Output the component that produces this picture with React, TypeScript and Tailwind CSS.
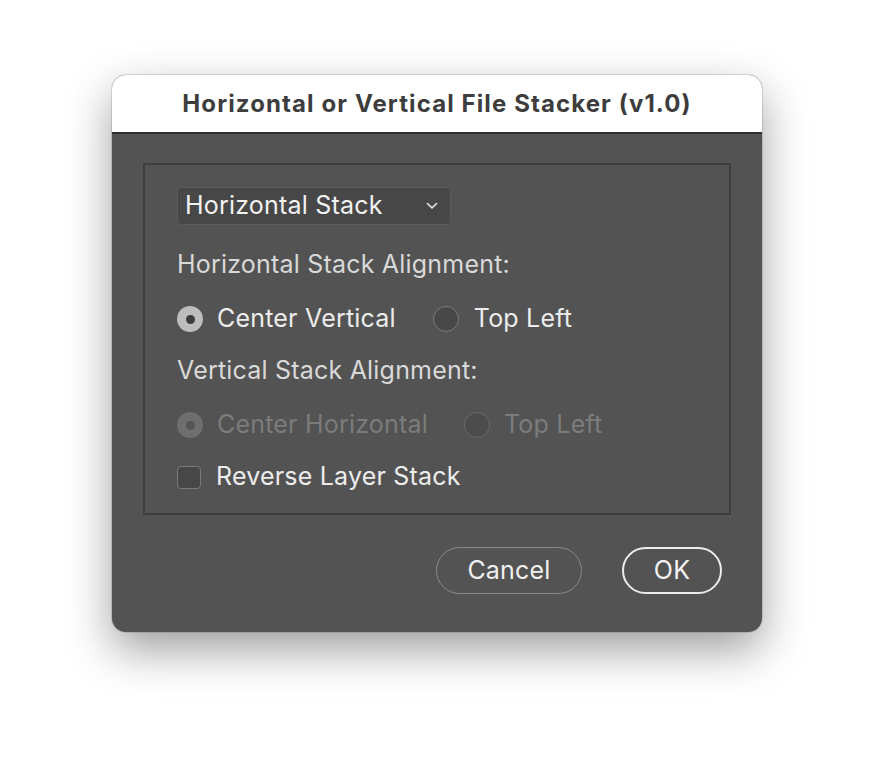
import { useState } from "react";

const Radio = ({ checked, disabled }: { checked: boolean; disabled?: boolean }) => (
  <span
    className={
      "flex h-[26px] w-[26px] shrink-0 items-center justify-center rounded-full " +
      (checked
        ? disabled
          ? "bg-[#6e6e6e]"
          : "bg-[#bdbdbd]"
        : disabled
          ? "border-[1.5px] border-[#6a6a6a] bg-[#4c4c4c]"
          : "border-[1.5px] border-[#7c7c7c] bg-[#484848]")
    }
  >
    {checked && (
      <span className={"h-[9px] w-[9px] rounded-full " + (disabled ? "bg-[#555]" : "bg-[#3c3c3c]")} />
    )}
  </span>
);

export default function App() {
  const [hAlign, setHAlign] = useState("center");
  const [reverse, setReverse] = useState(false);

  return (
    <div
      className="flex min-h-[780px] justify-center bg-white pt-[75px]"
      style={{ fontFamily: "Inter, 'Noto Sans', sans-serif" }}
    >
      <div className="flex h-[557px] w-[650px] flex-col overflow-hidden rounded-[14px] bg-[#535353] shadow-[0_18px_45px_rgba(0,0,0,0.38),0_0_0_1px_rgba(0,0,0,0.12)]">
        <div className="flex h-[59px] shrink-0 items-center justify-center border-b-2 border-[#303030] bg-white">
          <h1 className="text-[24px] font-bold tracking-[1.1px] text-[#3d3d3d]">
            Horizontal or Vertical File Stacker (v1.0)
          </h1>
        </div>

        <div className="px-[31px] pt-[29px]">
          <div className="flex flex-col border-2 border-[#3d3d3d] px-[32px] pt-[22px] pb-[13px] text-[25px] tracking-[0.2px] text-[#ececec]">
            <button className="flex h-[38px] w-[274px] items-center justify-between rounded-[4px] border border-[#5c5c5c] bg-[#474747] pr-[12px] pl-[7px] text-[#f2f2f2]">
              <span>Horizontal Stack</span>
              <svg width="12" height="8" viewBox="0 0 12 8" fill="none">
                <path d="M1.5 1.5 6 6l4.5-4.5" stroke="#e6e6e6" strokeWidth="1.6" strokeLinecap="round" strokeLinejoin="round" />
              </svg>
            </button>

            <div className="mt-[13px] flex h-[54px] items-center text-[#d9d9d9]">Horizontal Stack Alignment:</div>

            <div className="flex h-[54px] items-center">
              <label className="flex cursor-pointer items-center gap-[14px]" onClick={() => setHAlign("center")}>
                <Radio checked={hAlign === "center"} />
                <span>Center Vertical</span>
              </label>
              <label className="ml-[37px] flex cursor-pointer items-center gap-[15px]" onClick={() => setHAlign("top")}>
                <Radio checked={hAlign === "top"} />
                <span>Top Left</span>
              </label>
            </div>

            <div className="flex h-[50px] items-center text-[#d9d9d9]">Vertical Stack Alignment:</div>

            <div className="flex h-[58px] items-center text-[#7c7c7c]">
              <div className="flex items-center gap-[14px]">
                <Radio checked disabled />
                <span>Center Horizontal</span>
              </div>
              <div className="ml-[36px] flex items-center gap-[14px]">
                <Radio checked={false} disabled />
                <span>Top Left</span>
              </div>
            </div>

            <label className="flex h-[46px] cursor-pointer items-center gap-[15px]" onClick={() => setReverse(!reverse)}>
              <span className="flex h-[23px] w-[24px] items-center justify-center rounded-[4px] border-[1.5px] border-[#7a7a7a] bg-[#474747]">
                {reverse && (
                  <svg width="14" height="12" viewBox="0 0 14 12" fill="none">
                    <path d="M1.5 6.5 5 10l7.5-8.5" stroke="#eee" strokeWidth="2" strokeLinecap="round" strokeLinejoin="round" />
                  </svg>
                )}
              </span>
              <span>Reverse Layer Stack</span>
            </label>
          </div>
        </div>

        <div className="mt-[32px] flex justify-end gap-[40px] pr-[40px] text-[25px] tracking-[0.2px]">
          <button className="h-[47px] w-[146px] rounded-full border-[1.5px] border-[#8a8a8a] text-[#f0f0f0]">
            Cancel
          </button>
          <button className="h-[47px] w-[100px] rounded-full border-2 border-[#ececec] text-[#f4f4f4]">
            OK
          </button>
        </div>
      </div>
    </div>
  );
}
